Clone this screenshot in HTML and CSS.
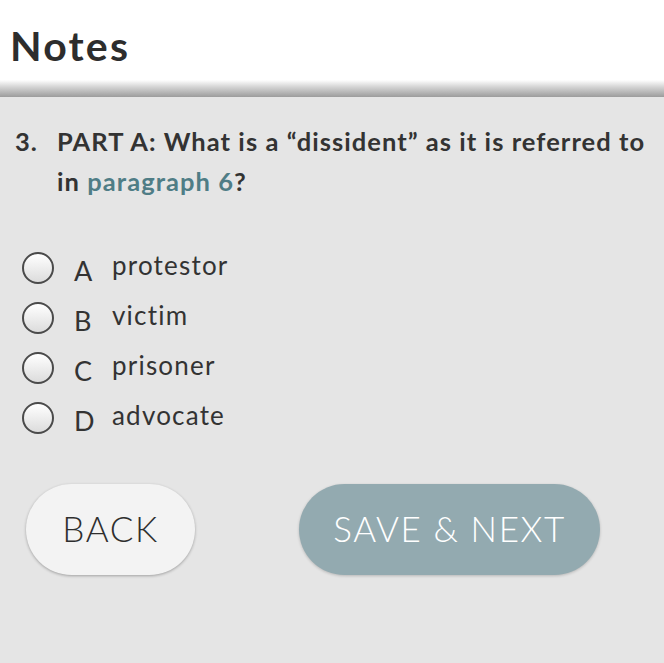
FILE: index.html
```html
<!DOCTYPE html>
<html>
<head>
<meta charset="utf-8">
<link rel="stylesheet" href="styles.css">
</head>
<body>
<header class="header">
  <h1 class="title">Notes</h1>
</header>
<div class="shade"></div>
<main class="content">
  <div class="question">
    <span class="qnum">3.</span>
    <p class="qtext">PART A: What is a “dissident” as it is referred to in <span class="link">paragraph 6</span>?</p>
  </div>
  <ul class="options">
    <li class="option"><span class="radio"></span><span class="letter">A</span><span class="answer">protestor</span></li>
    <li class="option"><span class="radio"></span><span class="letter">B</span><span class="answer">victim</span></li>
    <li class="option"><span class="radio"></span><span class="letter">C</span><span class="answer">prisoner</span></li>
    <li class="option"><span class="radio"></span><span class="letter">D</span><span class="answer">advocate</span></li>
  </ul>
  <div class="buttons">
    <button class="btn btn-back">BACK</button>
    <button class="btn btn-next">SAVE &amp; NEXT</button>
  </div>
</main>
</body>
</html>
```
FILE: styles.css
```css
* { box-sizing: border-box; }
html, body { margin: 0; padding: 0; }
body {
  width: 664px;
  height: 663px;
  overflow: hidden;
  background: #e5e5e5;
  font-family: Lato, "Open Sans", sans-serif;
  color: #333;
}
.header {
  background: #fff;
  height: 80px;
  padding: 0 0 0 10px;
  display: flex;
  align-items: center;
}
.title {
  margin: 0;
  font-size: 41px;
  font-weight: 700;
  color: #2d2d2d;
  letter-spacing: 2.2px;
  padding-top: 10px;
}
.shade {
  height: 17px;
  background: linear-gradient(#ffffff, #d0d0d0 45%, #9c9c9c);
}
.content {
  padding: 24px 0 0 0;
}
.question {
  display: flex;
  padding-left: 15px;
}
.qnum {
  width: 42px;
  flex: none;
  font-size: 25.5px;
  font-weight: 700;
  line-height: 40px;
  color: #333;
  letter-spacing: 1px;
}
.qtext {
  margin: 0;
  font-size: 25.5px;
  font-weight: 700;
  line-height: 40px;
  color: #333;
  width: 600px;
  letter-spacing: 1.05px;
}
.link { color: #4f7d86; }
.options {
  list-style: none;
  margin: 42px 0 0 0;
  padding: 0 0 0 22px;
}
.option {
  display: flex;
  align-items: center;
  height: 50px;
}
.radio {
  width: 32px;
  height: 32px;
  border-radius: 50%;
  border: 2px solid #4a4a4a;
  background: linear-gradient(#ffffff, #dcdcdc);
  flex: none;
}
.letter {
  padding-left: 20px;
  box-sizing: content-box;
  width: 18px;
  font-size: 27px;
  color: #333;
  margin-top: 4px;
}
.answer {
  margin-left: 20px;
  font-size: 26px;
  color: #333;
  margin-top: -6px;
  letter-spacing: 1.2px;
}
.buttons {
  display: flex;
  margin-top: 41px;
  padding-left: 26px;
}
.btn {
  font-family: Lato, sans-serif;
  font-weight: 300;
  font-size: 35px;
  letter-spacing: 1.6px;
  border: none;
  border-radius: 46px;
  height: 91px;
  padding: 0 0 3px 0;
}
.btn-back {
  width: 169px;
  background: #f3f3f3;
  color: #2e2e2e;
  box-shadow: 0 1px 3px rgba(0,0,0,0.3);
}
.btn-next {
  margin-left: 104px;
  width: 301px;
  background: #93aab0;
  color: #fff;
  box-shadow: 0 1px 3px rgba(0,0,0,0.2);
}
```
